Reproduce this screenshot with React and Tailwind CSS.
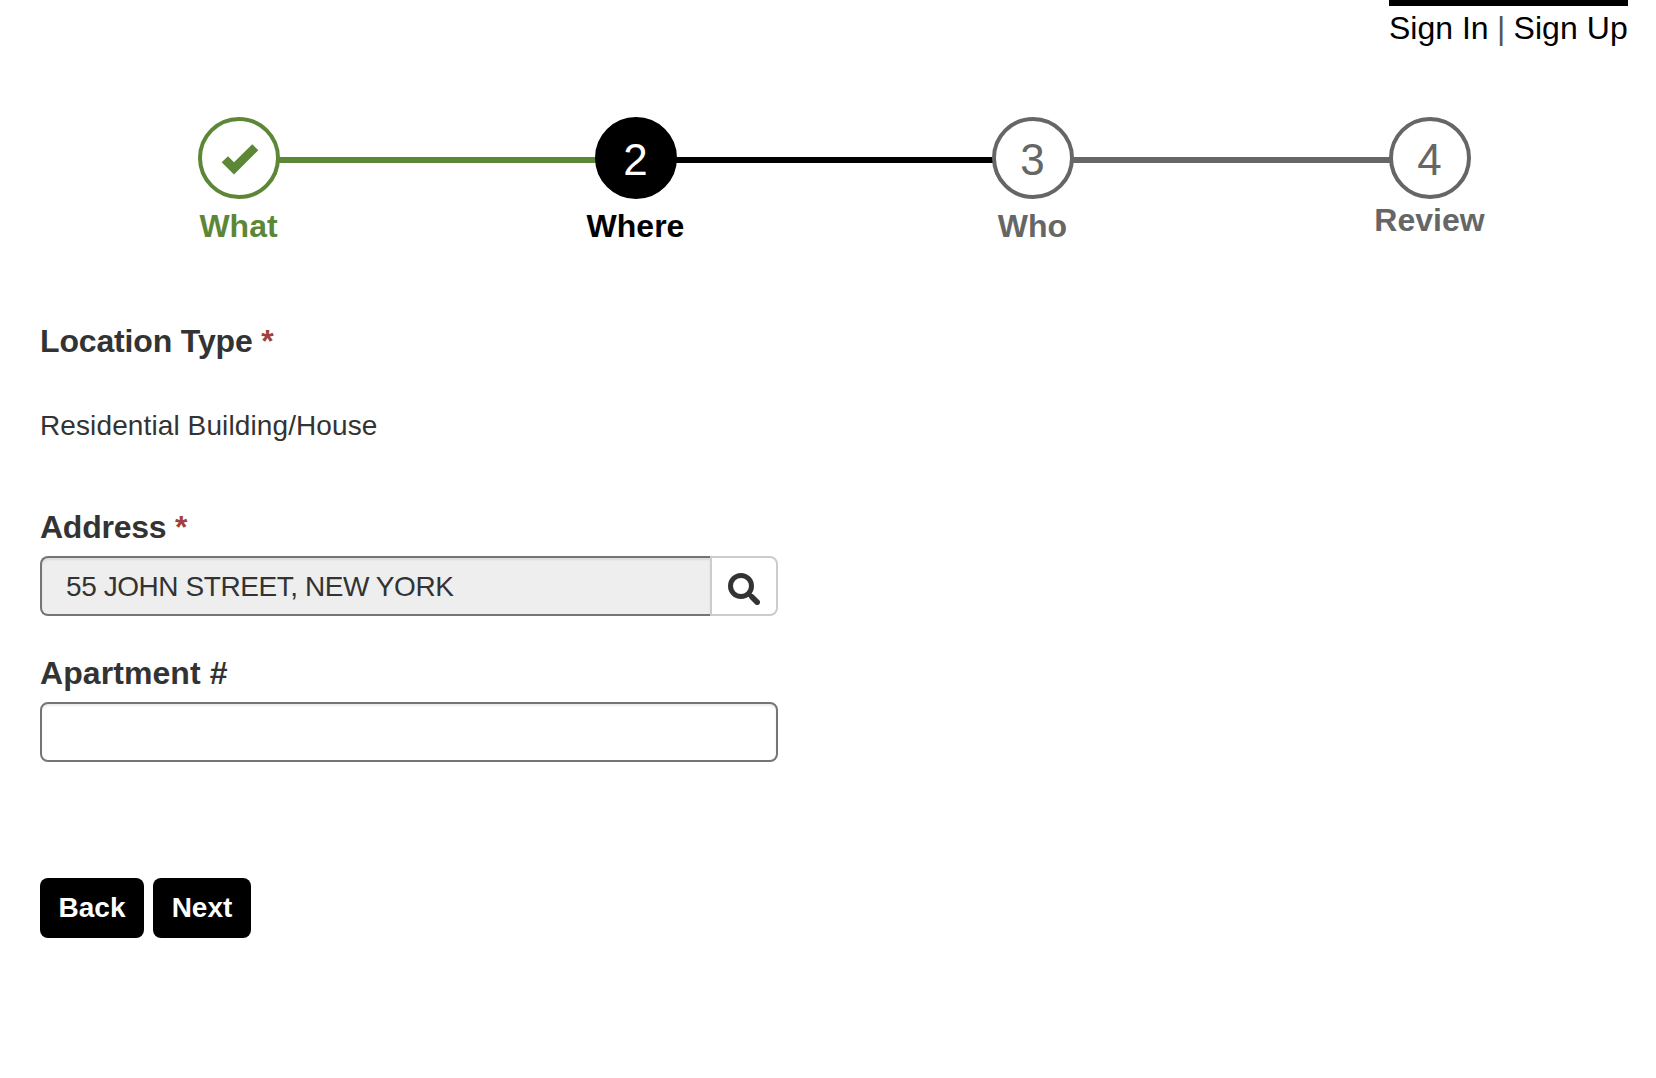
const STEPS = [
  { label: "What", circle: "border-[#5c8736] bg-white", text: "text-[#5c8736]", line: "bg-[#5c8736]", done: true },
  { label: "Where", number: 2, circle: "border-black bg-black text-white", text: "text-black", line: "bg-black" },
  { label: "Who", number: 3, circle: "border-[#666666] bg-white text-[#666666]", text: "text-[#666666]", line: "bg-[#666666]" },
  { label: "Review", number: 4, circle: "border-[#666666] bg-white text-[#666666]", text: "text-[#666666]" },
];

function CheckIcon() {
  return (
    <svg width="38" height="32" viewBox="0 0 38 32" fill="currentColor" className="translate-x-px translate-y-[2px] text-[#5c8736]" aria-hidden="true">
      <path d="M7 12.3 L13 18.3 L31.3 0.3 L37.3 6.3 L13 30.5 L0.7 18.3 Z" />
    </svg>
  );
}

function SearchIcon() {
  return (
    <svg width="32" height="32" viewBox="0 0 32 32" fill="none" stroke="#333333" aria-hidden="true">
      <circle cx="13" cy="13" r="10.5" strokeWidth="5" />
      <path d="M20.5 20.5 L24 24" strokeWidth="4" />
      <path d="M24 24 L29.2 29.2" strokeWidth="5.6" strokeLinecap="round" />
    </svg>
  );
}

function Step({ step }) {
  return (
    <li className="flex flex-col items-center">
      <div className={`flex size-[82px] items-center justify-center rounded-full border-4 text-[44px] leading-none ${step.circle}`}>
        {step.done ? <CheckIcon /> : <span className="translate-y-[2px]">{step.number}</span>}
      </div>
      <div className={`text-[32px] leading-8 font-bold ${step.line ? "mt-[11px]" : "mt-[5px]"} ${step.text}`}>{step.label}</div>
    </li>
  );
}

export default function App() {
  return (
    <main className="flex min-h-screen flex-col bg-white pr-[28px] pl-10 text-[#333333] [font-family:'Liberation_Sans',Arial,sans-serif]">
      <header className="flex h-[117px] justify-end">
        <div className="flex h-[50px] w-[239px] justify-between border-t-[6px] border-black pt-[6px] text-[32px] leading-8 whitespace-nowrap text-black">
          <span>Sign In</span>
          <span className="text-[#555555]">|</span>
          <span className="tracking-[0.1px]">Sign Up</span>
        </div>
      </header>

      <div className="grid h-[126px]">
        <div className="col-start-1 row-start-1 mt-[40px] mr-[198px] ml-[199px] flex h-[6px]">
          {STEPS.slice(0, 3).map((step) => (
            <div key={step.label} className={`flex-1 ${step.line}`} />
          ))}
        </div>
        <ol className="relative col-start-1 row-start-1 grid grid-cols-4">
          {STEPS.map((step) => (
            <Step key={step.label} step={step} />
          ))}
        </ol>
      </div>

      <form className="flex w-[738px] flex-col">
        <div className="mt-[82px] text-[32px] leading-8 font-bold tracking-[-0.15px]">
          Location Type <span className="text-[#a0413d]">*</span>
        </div>
        <div className="mt-[55px] text-[28px] leading-7 tracking-[0.11px]">Residential Building/House</div>

        <label className="mt-[71px] text-[32px] leading-8 font-bold tracking-[-0.25px]">
          Address <span className="text-[#a0413d]">*</span>
        </label>
        <div className="mt-[13px] flex h-[60px]">
          <div className="flex flex-1 items-center rounded-l-lg border-2 border-r-0 border-[#757575] bg-[#eeeeee] px-6 pt-px text-[28px] leading-7 tracking-[-0.43px] shadow-[inset_0_2px_2px_rgba(0,0,0,0.075)]">
            55 JOHN STREET, NEW YORK
          </div>
          <button type="button" aria-label="Search" className="flex w-[68px] items-center justify-center rounded-r-lg border-2 border-[#cccccc] bg-white pt-[6px]">
            <SearchIcon />
          </button>
        </div>

        <label htmlFor="apartment" className="mt-[41px] text-[32px] leading-8 font-bold tracking-[0.08px]">Apartment #</label>
        <input id="apartment" className="mt-[13px] h-[60px] rounded-lg border-2 border-[#757575] bg-white px-6 text-[28px] shadow-[inset_0_2px_2px_rgba(0,0,0,0.075)]" />

        <div className="mt-[116px] flex gap-[9px] text-[28px] leading-7 font-bold text-white">
          <button type="button" className="h-[60px] w-[104px] rounded-lg bg-black">Back</button>
          <button type="button" className="h-[60px] w-[98px] rounded-lg bg-black">Next</button>
        </div>
      </form>
    </main>
  );
}
